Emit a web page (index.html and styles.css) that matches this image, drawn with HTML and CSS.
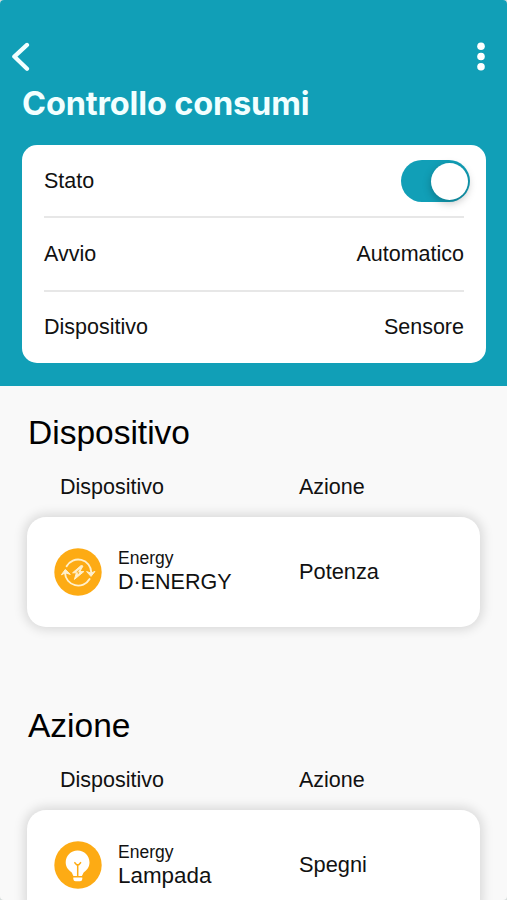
FILE: index.html
```
<!DOCTYPE html>
<html lang="it">
<head>
  <meta charset="UTF-8">
  <meta name="viewport" content="width=device-width, initial-scale=1">
  <title>Controllo consumi</title>
  <link rel="stylesheet" href="styles.css">
</head>
<body>
  <div class="screen">

    <header class="header">
      <div class="topbar">
        <svg class="back" viewBox="0 0 20 30" width="20" height="30">
          <path d="M17 2.9 4.3 14.6 17 26.7" fill="none" stroke="#f2ffff" stroke-width="4.2" stroke-linecap="round" stroke-linejoin="round"/>
        </svg>
        <svg class="menu" viewBox="0 0 10 30" width="10" height="30">
          <circle cx="5" cy="4.2" r="3.8"/>
          <circle cx="5" cy="14.5" r="3.8"/>
          <circle cx="5" cy="24.8" r="3.8"/>
        </svg>
      </div>

      <h1>Controllo consumi</h1>

      <div class="settings">
        <div class="row">
          <span>Stato</span>
          <span class="toggle"><span class="knob"></span></span>
        </div>
        <div class="row">
          <span>Avvio</span>
          <span>Automatico</span>
        </div>
        <div class="row">
          <span>Dispositivo</span>
          <span>Sensore</span>
        </div>
      </div>
    </header>

    <main>
      <section>
        <h2>Dispositivo</h2>
        <div class="labels">
          <span>Dispositivo</span>
          <span>Azione</span>
        </div>
        <div class="card">
          <svg class="icon" viewBox="0 0 48 48" width="48" height="48">
            <circle cx="24" cy="24" r="23.7" fill="#fdab14"/>
            <g fill="none" stroke="#fff0cc" stroke-width="1.9" stroke-linecap="round" stroke-linejoin="round">
              <path d="M12.6 18.2A13.2 13.2 0 0 1 37.3 24.5"/>
              <path d="M35.6 31A13.2 13.2 0 0 1 11 25"/>
            </g>
            <path d="M7.4 26.8 11.3 21.4 16.3 26.4 11.4 24.9ZM32.6 23.6 37 28.4 41 23.4 37 25Z" fill="#fff0cc" stroke="#fff0cc" stroke-width="1" stroke-linejoin="round"/>
            <path d="M27 17.6 18.6 24.8H22.4L20.4 31.4 29.8 23.6H25.8L29 18Z" fill="#fff0cc" stroke="#fff0cc" stroke-linejoin="round"/>
            <path d="M25.2 21.6 22.8 24.1H25L24 26.2" fill="none" stroke="#fdab14" stroke-width=".8"/>
          </svg>
          <div class="device">
            <span class="type">Energy</span>
            <span class="name">D·ENERGY</span>
          </div>
          <span class="action">Potenza</span>
        </div>
      </section>

      <section>
        <h2>Azione</h2>
        <div class="labels">
          <span>Dispositivo</span>
          <span>Azione</span>
        </div>
        <div class="card">
          <svg class="icon" viewBox="0 0 48 48" width="48" height="48">
            <circle cx="24" cy="24" r="23.7" fill="#fdab14"/>
            <path d="M23.6 9.4C16.8 9.4 11.7 14.8 11.7 21.2 11.7 26 14.4 29 17.2 31 18.8 32.2 18.6 35 20 35H27.4C28.8 35 28.6 32.2 30.2 31 33 29 35.5 26 35.5 21.2 35.5 14.8 30.4 9.4 23.6 9.4Z" fill="#fff"/>
            <path d="M20.4 21.3 22.6 23.8H24.8L27 21.3M23.7 23.8V35.2" fill="none" stroke="#fdab14" stroke-width="1.5"/>
            <path d="M19.3 36.4H28.3V38Q28.1 40.2 26.1 40.2H21.5Q19.5 40.2 19.3 38Z" fill="#fff"/>
          </svg>
          <div class="device">
            <span class="type">Energy</span>
            <span class="name lower">Lampada</span>
          </div>
          <span class="action">Spegni</span>
        </div>
      </section>
    </main>

  </div>
</body>
</html>
```
FILE: styles.css
```
* {
  box-sizing: border-box;
}

body {
  margin: 0;
  background: #d5dcda;
  font-family: "Liberation Sans", Arial, sans-serif;
  color: #111;
}

.screen {
  height: 900px;
  overflow: hidden;
  border-radius: 4px;
  background: #f9f9f9;
}

.header {
  height: 386px;
  padding: 42px 21px 0 22px;
  background: #119fb7;
}

.topbar {
  display: flex;
  justify-content: space-between;
  margin: 0 0 0 -12px;
}

.menu {
  fill: #fff;
}

h1 {
  margin: 12px 0 20.5px;
  font-family: Inter, sans-serif;
  font-size: 32.5px;
  font-weight: 700;
  line-height: 40px;
  letter-spacing: -0.15px;
  white-space: nowrap;
  color: #f2ffff;
}

.settings {
  height: 218.5px;
  padding: 0 22px;
  border-radius: 15px;
  background: #fff;
  font-size: 21.5px;
}

.row {
  display: flex;
  align-items: center;
  justify-content: space-between;
  height: 74px;
  padding-top: 2px;
  border-bottom: 2px solid #e7e7e7;
}

.row:first-child {
  height: 73px;
}

.row:last-child {
  height: 71px;
  padding-top: 0;
  border-bottom: none;
}

.toggle {
  display: flex;
  justify-content: flex-end;
  width: 69px;
  height: 42px;
  margin-right: -6px;
  padding: 2.5px;
  border-radius: 21px;
  background: #119fb7;
}

.knob {
  width: 37px;
  height: 37px;
  border-radius: 50%;
  background: #fff;
  box-shadow: 0 3px 8px rgba(0, 0, 0, 0.25);
}

main {
  padding: 27px 27px 0;
}

section {
  height: 293px;
}

h2 {
  margin: 0 0 21px 1px;
  font-size: 33.5px;
  font-weight: 400;
  line-height: 40px;
  color: #000;
}

.labels {
  display: grid;
  grid-template-columns: 239px 1fr;
  margin-bottom: 16px;
  padding-left: 33px;
  font-size: 21.5px;
  line-height: 27px;
}

.card {
  display: grid;
  grid-template-columns: 64px 181px 1fr;
  align-items: center;
  height: 110px;
  padding-left: 27px;
  border-radius: 19px;
  background: #fff;
  box-shadow: 0 0 11px 3px rgba(0, 0, 0, 0.13);
}

.device {
  display: flex;
  flex-direction: column;
}

.type {
  font-size: 17.5px;
  line-height: 21px;
}

.name {
  font-size: 21.5px;
  line-height: 27px;
}

.name.lower {
  font-size: 22.4px;
  line-height: 26px;
}

.action {
  padding-bottom: 1px;
  font-size: 21.8px;
}
```
